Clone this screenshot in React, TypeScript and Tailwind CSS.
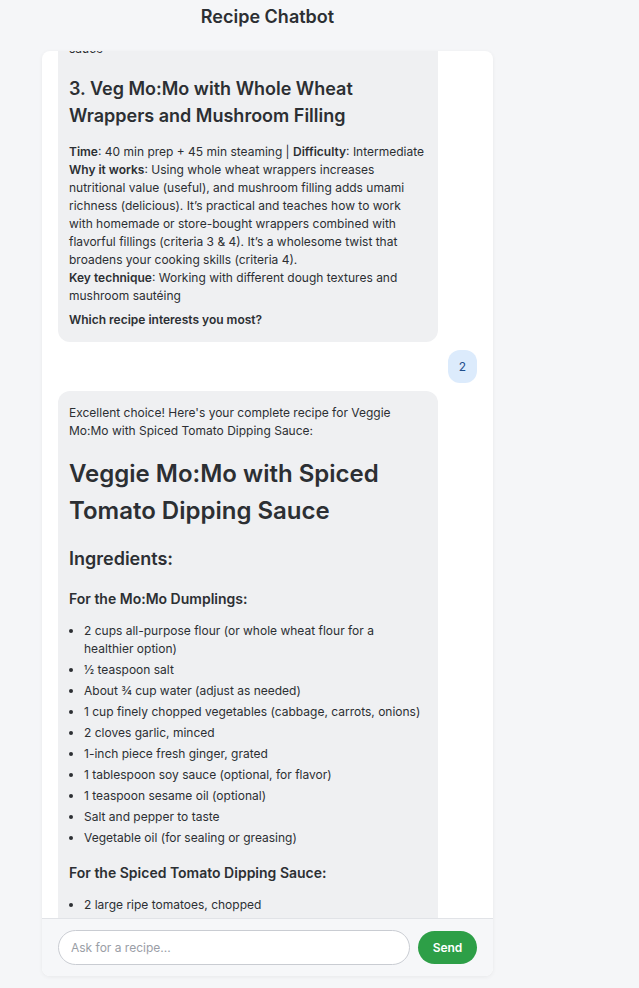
import React, { useLayoutEffect, useRef } from 'react';

const Bold: React.FC<{ children: React.ReactNode }> = ({ children }) => (
  <span className="font-semibold">{children}</span>
);

const BotBubble: React.FC<{ children: React.ReactNode }> = ({ children }) => (
  <div className="self-start w-[380px] rounded-xl bg-[#eff0f2] pl-[11px] pr-[13px] pt-[13px] pb-[13px] text-[12px] leading-[18px] text-[#2c2f33]">
    {children}
  </div>
);

const UserBubble: React.FC<{ children: React.ReactNode }> = ({ children }) => (
  <div className="self-end rounded-xl bg-[#dcebfc] px-[11px] py-2 text-[12px] leading-[17px] text-[#1f4e8c]">
    {children}
  </div>
);

const Bullets: React.FC<{ items: string[] }> = ({ items }) => (
  <ul className="mt-[13px] list-disc pl-[15px] marker:text-[#2c2f33]">
    {items.map((item) => (
      <li key={item} className="mt-[3px] first:mt-0 pl-0">
        {item}
      </li>
    ))}
  </ul>
);

const dumplings = [
  '2 cups all-purpose flour (or whole wheat flour for a healthier option)',
  '½ teaspoon salt',
  'About ¾ cup water (adjust as needed)',
  '1 cup finely chopped vegetables (cabbage, carrots, onions)',
  '2 cloves garlic, minced',
  '1-inch piece fresh ginger, grated',
  '1 tablespoon soy sauce (optional, for flavor)',
  '1 teaspoon sesame oil (optional)',
  'Salt and pepper to taste',
  'Vegetable oil (for sealing or greasing)',
];

const sauce = [
  '2 large ripe tomatoes, chopped',
  '2 dried red chilies (soaked in warm water)',
  '1 tablespoon sesame seeds, toasted',
  '2 cloves garlic',
  '½ teaspoon cumin powder',
  'Salt to taste',
  'Fresh cilantro for garnish',
];

export default function App() {
  const scrollRef = useRef<HTMLDivElement>(null);
  const anchorRef = useRef<HTMLHeadingElement>(null);

  useLayoutEffect(() => {
    if (scrollRef.current && anchorRef.current) {
      scrollRef.current.scrollTop = anchorRef.current.offsetTop - 24;
    }
  }, []);

  return (
    <div className="min-h-[988px] bg-[#f5f6f8] font-['Inter',sans-serif] text-[#2c2f33]">
      <div className="ml-[42px] w-[451px] pt-[5px]">
        <h1 className="text-center text-[18px] leading-[24px] font-semibold text-[#2c2f33]">Recipe Chatbot</h1>

        <div className="mt-[22px] flex h-[925px] flex-col overflow-hidden rounded-lg bg-white shadow-[0_1px_4px_rgba(0,0,0,0.06)]">
          {/* Messages */}
          <div
            ref={scrollRef}
            className="relative flex flex-1 flex-col gap-2 overflow-y-auto p-4 [scrollbar-width:none]"
          >
            <UserBubble>Suggest 3 recipes for Mo:Mo</UserBubble>

            <BotBubble>
              <p>Here are three Mo:Mo recipes that match your criteria:</p>

              <h3 className="mt-[17px] text-[18px] leading-[27px] font-semibold">
                1. Classic Chicken Mo:Mo with Tomato Achar
              </h3>
              <p className="mt-[14px]">
                <Bold>Time</Bold>: 45 min prep + 15 min steaming | <Bold>Difficulty</Bold>: Intermediate
                <br />
                <Bold>Why it works</Bold>: A traditional favorite with juicy filling and a tangy achar.
                <br />
                <Bold>Key technique</Bold>: Pleating and steaming dumplings
              </p>

              <h3 className="mt-[17px] text-[18px] leading-[27px] font-semibold">
                2. Veggie Mo:Mo with Spiced Tomato Dipping Sauce
              </h3>
              <p className="mt-[14px]">
                <Bold>Time</Bold>: 40 min prep + 20 min steaming | <Bold>Difficulty</Bold>: Easy
                <br />
                <Bold>Why it works</Bold>: Light, colorful and packed with fresh vegetables.
                <br />
                <Bold>Key technique</Bold>: Balancing spices in a smooth tomato dipping
                <br />
                sauce
              </p>

              <h3 ref={anchorRef} className="mt-[17px] text-[18px] leading-[27px] font-semibold">
                3. Veg Mo:Mo with Whole Wheat Wrappers and Mushroom Filling
              </h3>
              <p className="mt-[14px]">
                <Bold>Time</Bold>: 40 min prep + 45 min steaming | <Bold>Difficulty</Bold>: Intermediate
                <br />
                <Bold>Why it works</Bold>: Using whole wheat wrappers increases nutritional value (useful), and
                mushroom filling adds umami richness (delicious). It’s practical and teaches how to work with
                homemade or store-bought wrappers combined with flavorful fillings (criteria 3 &amp; 4). It’s a
                wholesome twist that broadens your cooking skills (criteria 4).
                <br />
                <Bold>Key technique</Bold>: Working with different dough textures and mushroom sautéing
              </p>
              <p className="mt-[6px] font-semibold">Which recipe interests you most?</p>
            </BotBubble>

            <UserBubble>2</UserBubble>

            <BotBubble>
              <p>Excellent choice! Here's your complete recipe for Veggie Mo:Mo with Spiced Tomato Dipping Sauce:</p>
              <h1 className="mt-[15px] text-[24px] leading-[37px] font-semibold">
                Veggie Mo:Mo with Spiced Tomato Dipping Sauce
              </h1>
              <h2 className="mt-[16px] text-[18px] leading-[27px] font-semibold">Ingredients:</h2>
              <h4 className="mt-[16px] text-[14px] leading-[21px] font-semibold">For the Mo:Mo Dumplings:</h4>
              <Bullets items={dumplings} />
              <h4 className="mt-[15px] text-[14px] leading-[21px] font-semibold">
                For the Spiced Tomato Dipping Sauce:
              </h4>
              <Bullets items={sauce} />
            </BotBubble>
          </div>

          {/* Input */}
          <div className="flex items-center gap-2 border-t border-[#e1e3e7] bg-[#f6f7f9] px-4 py-[11px]">
            <input
              type="text"
              placeholder="Ask for a recipe..."
              className="h-[35px] flex-1 rounded-full border border-[#c9ccd2] bg-white px-3 text-[12px] text-[#2c2f33] outline-none placeholder:text-[#9a9ea6]"
            />
            <button className="h-[33px] w-[59px] rounded-full bg-[#2d9f47] text-[12px] font-semibold text-white">
              Send
            </button>
          </div>
        </div>
      </div>
    </div>
  );
}
